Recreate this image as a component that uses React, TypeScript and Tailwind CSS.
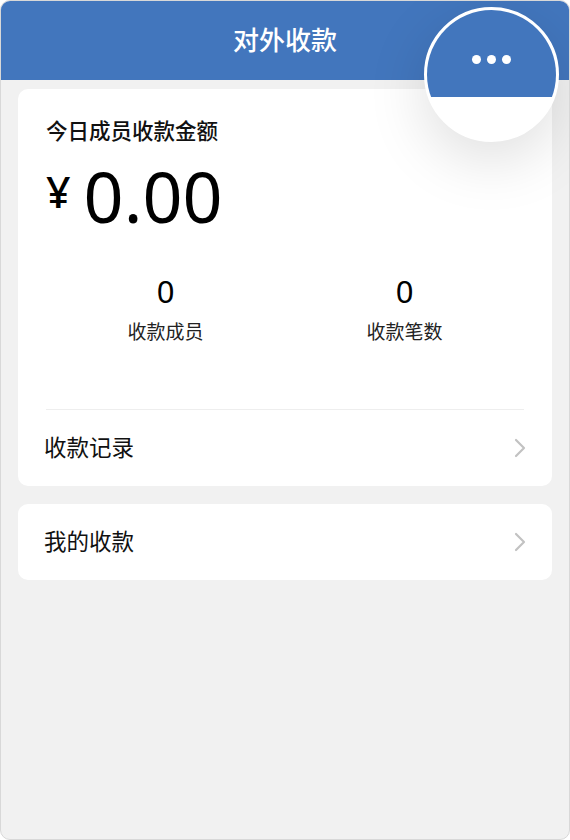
const font = { fontFamily: '"Noto Sans", "Noto Sans CJK SC", sans-serif' };

function Chevron() {
  return (
    <svg width="12" height="20" viewBox="0 0 12 20" fill="none" className="mr-[-2px]">
      <polyline
        points="2,2 10,10 2,18"
        stroke="#c2c2c2"
        strokeWidth="2.2"
        strokeLinecap="round"
        strokeLinejoin="round"
      />
    </svg>
  );
}

function Stat({ value, label }: { value: string; label: string }) {
  return (
    <div className="flex flex-col items-center">
      <span className="text-[31px] leading-none text-black">{value}</span>
      <span className="mt-[16px] text-[19px] leading-none text-[#222]">{label}</span>
    </div>
  );
}

function Row({ title }: { title: string }) {
  return (
    <div className="flex h-[76px] items-center justify-between">
      <span className="-ml-[2px] text-[22.5px] text-[#111]">{title}</span>
      <Chevron />
    </div>
  );
}

export default function App() {
  return (
    <div
      className="relative h-[840px] w-[570px] overflow-hidden rounded-[10px] border border-[#d8d8d8] bg-[#f1f1f1]"
      style={font}
    >
      <header className="flex h-[79px] items-center justify-center bg-[#4276bd]">
        <h1 className="text-[26px] font-medium text-white">对外收款</h1>
      </header>

      <main className="space-y-[18px] px-[17px] pt-[9px]">
        <section className="rounded-[10px] bg-white px-[28px]">
          <p className="pt-[31px] text-[21.5px] font-medium leading-none text-[#111]">
            今日成员收款金额
          </p>
          <div className="mt-[19px] flex h-[70px] items-center gap-[13px] text-black">
            <span className="mb-[8px] text-[43px] font-medium leading-none">¥</span>
            <span className="text-[70px] leading-none">0.00</span>
          </div>
          <div className="mt-[45px] grid grid-cols-2 pb-[67px]">
            <Stat value="0" label="收款成员" />
            <Stat value="0" label="收款笔数" />
          </div>
          <div className="border-t border-[#eeeeee]">
            <Row title="收款记录" />
          </div>
        </section>

        <section className="rounded-[10px] bg-white px-[28px]">
          <Row title="我的收款" />
        </section>
      </main>

      {/* magnifier over the menu button */}
      <div className="absolute left-[423px] top-[6px] h-[135px] w-[135px] overflow-hidden rounded-full border-[3px] border-white bg-white shadow-[0_18px_60px_rgba(0,0,0,0.13)]">
        <div className="flex h-[87px] items-start justify-center gap-[6px] bg-[#4276bd] pt-[45px]">
          <span className="h-[9px] w-[9px] rounded-full bg-white" />
          <span className="h-[9px] w-[9px] rounded-full bg-white" />
          <span className="h-[9px] w-[9px] rounded-full bg-white" />
        </div>
      </div>
    </div>
  );
}
